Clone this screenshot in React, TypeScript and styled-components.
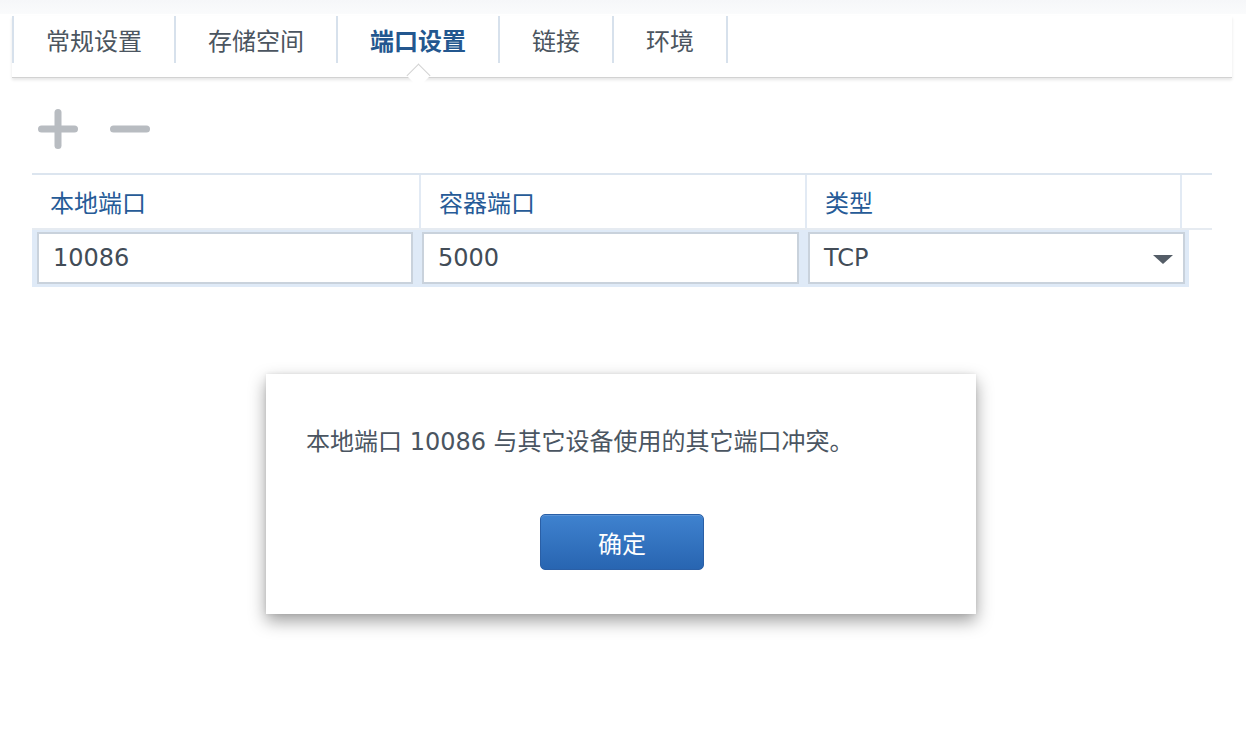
import React from "react";
import styled, { createGlobalStyle } from "styled-components";

const Global = createGlobalStyle`
  html, body { margin: 0; padding: 0; background: #ffffff; }
  body {
    font-family: "DejaVu Sans", "Noto Sans CJK SC", sans-serif;
    width: 1246px;
    height: 752px;
    overflow: hidden;
  }
`;

const Page = styled.div`
  position: relative;
  width: 1246px;
  height: 752px;
  background: #ffffff;
`;

const TopBand = styled.div`
  height: 14px;
  background: linear-gradient(#f6f7f9, #fafbfc);
`;

const TabBar = styled.div`
  position: relative;
  margin: 2px 14px 0 12px;
  height: 61px;
  display: flex;
  align-items: stretch;
  border-bottom: 1px solid #d2d2d2;
  box-shadow: 0 2px 3px rgba(0, 0, 0, 0.1);
`;

const Tab = styled.div<{ $active?: boolean; $last?: boolean }>`
  position: relative;
  display: flex;
  align-items: center;
  justify-content: center;
  height: 47px;
  padding: 0 32px;
  border-left: 2px solid #d7e1ec;
  ${(p) => (p.$last ? "border-right: 2px solid #d7e1ec;" : "")}
  font-family: "Noto Sans CJK SC", sans-serif;
  font-size: 24px;
  color: ${(p) => (p.$active ? "#23578f" : "#4b5560")};
  font-weight: ${(p) => (p.$active ? 700 : 400)};
  ${(p) =>
    p.$active
      ? `
    &::after {
      content: "";
      position: absolute;
      left: 50%;
      bottom: -21px;
      width: 16px;
      height: 16px;
      margin-left: -8px;
      background: #ffffff;
      border-top: 1px solid #d2d2d2;
      border-left: 1px solid #d2d2d2;
      transform: rotate(45deg);
    }
  `
      : ""}
`;

const Toolbar = styled.div`
  display: flex;
  align-items: center;
  gap: 32px;
  margin: 31px 0 0 38px;
  height: 40px;
`;

const ToolIcon = styled.svg`
  width: 40px;
  height: 40px;
  display: block;
`;

const Table = styled.div`
  margin: 24px 0 0 32px;
  width: 1180px;
`;

const HeaderRow = styled.div`
  display: grid;
  grid-template-columns: 387px 386px 375px 32px;
  height: 53px;
  border-top: 2px solid #dce5ef;
  border-bottom: 2px solid #e6ebf1;
`;

const HeaderCell = styled.div`
  display: flex;
  align-items: center;
  padding-left: 18px;
  border-left: 2px solid #e2eaf4;
  font-family: "Noto Sans CJK SC", sans-serif;
  font-size: 24px;
  color: #265b97;
  &:first-child {
    border-left: none;
  }
`;

const DataRow = styled.div`
  display: flex;
  gap: 9px;
  width: 1157px;
  box-sizing: border-box;
  padding: 2px 4px 3px 5px;
  background: #dfeaf7;
`;

const Field = styled.div<{ $w: number }>`
  position: relative;
  box-sizing: border-box;
  width: ${(p) => p.$w}px;
  height: 52px;
  display: flex;
  align-items: center;
  padding-left: 14px;
  background: #ffffff;
  border: 2px solid #c9d2dc;
  font-family: "DejaVu Sans", "Noto Sans CJK SC", sans-serif;
  font-size: 24px;
  color: #424c57;
`;

const Arrow = styled.span`
  position: absolute;
  right: 10px;
  top: 21px;
  width: 0;
  height: 0;
  border-left: 10px solid transparent;
  border-right: 10px solid transparent;
  border-top: 9px solid #545d67;
`;

const Dialog = styled.div`
  position: absolute;
  left: 266px;
  top: 374px;
  width: 710px;
  height: 240px;
  box-sizing: border-box;
  background: #ffffff;
  box-shadow: 0 7px 16px rgba(0, 0, 0, 0.38), 0 0 4px rgba(0, 0, 0, 0.08);
  display: flex;
  flex-direction: column;
  align-items: stretch;
  padding: 51px 40px 0 40px;
`;

const Message = styled.div`
  font-family: "DejaVu Sans", "Noto Sans CJK SC", sans-serif;
  font-size: 24px;
  line-height: 34px;
  color: #4a5561;
`;

const ButtonRow = styled.div`
  display: flex;
  justify-content: center;
  margin-top: 55px;
  padding-left: 2px;
`;

const OkButton = styled.button`
  width: 164px;
  height: 56px;
  border: 1px solid #2a5fa6;
  border-radius: 5px;
  background: linear-gradient(#3f82cf, #2865b1);
  color: #ffffff;
  font-family: "Noto Sans CJK SC", sans-serif;
  font-size: 24px;
  padding: 0;
  cursor: pointer;
  box-shadow: inset 0 1px 0 rgba(255, 255, 255, 0.15);
`;

const tabs = ["常规设置", "存储空间", "端口设置", "链接", "环境"];

export default function App() {
  return (
    <Page>
      <Global />
      <TopBand />
      <TabBar>
        {tabs.map((t, i) => (
          <Tab key={t} $active={i === 2} $last={i === tabs.length - 1}>
            {t}
          </Tab>
        ))}
      </TabBar>
      <Toolbar>
        <ToolIcon viewBox="0 0 40 40">
          <line x1="3.5" y1="20" x2="36.5" y2="20" stroke="#b8bcc1" strokeWidth="7" strokeLinecap="round" />
          <line x1="20" y1="3.5" x2="20" y2="36.5" stroke="#b8bcc1" strokeWidth="7" strokeLinecap="round" />
        </ToolIcon>
        <ToolIcon viewBox="0 0 40 40">
          <line x1="3.5" y1="20" x2="36.5" y2="20" stroke="#b8bcc1" strokeWidth="7" strokeLinecap="round" />
        </ToolIcon>
      </Toolbar>
      <Table>
        <HeaderRow>
          <HeaderCell>本地端口</HeaderCell>
          <HeaderCell>容器端口</HeaderCell>
          <HeaderCell>类型</HeaderCell>
          <HeaderCell />
        </HeaderRow>
        <DataRow>
          <Field $w={376}>10086</Field>
          <Field $w={377}>5000</Field>
          <Field $w={377}>
            TCP
            <Arrow />
          </Field>
        </DataRow>
      </Table>
      <Dialog>
        <Message>本地端口 10086 与其它设备使用的其它端口冲突。</Message>
        <ButtonRow>
          <OkButton>确定</OkButton>
        </ButtonRow>
      </Dialog>
    </Page>
  );
}
